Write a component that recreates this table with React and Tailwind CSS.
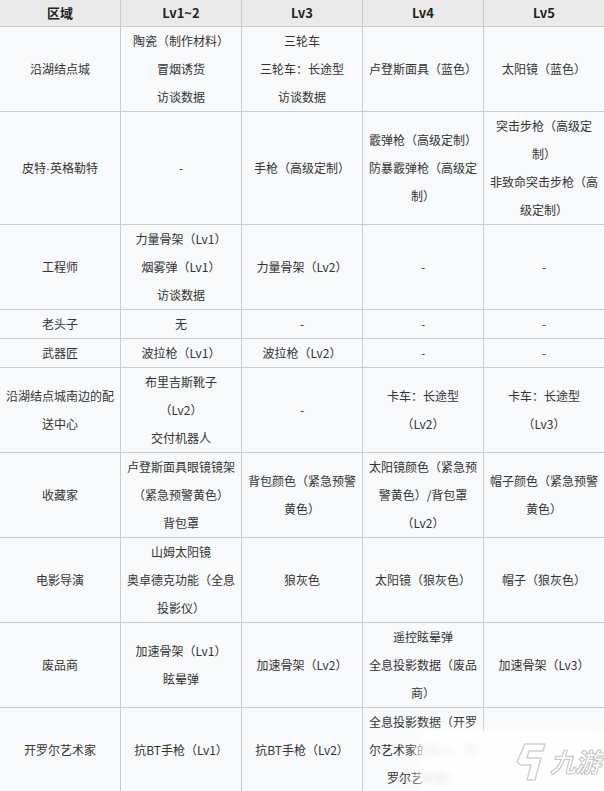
import React from "react";

const rows = [
  {
    area: "沿湖结点城",
    cells: [
      ["陶瓷（制作材料）", "冒烟诱货", "访谈数据"],
      ["三轮车", "三轮车：长途型", "访谈数据"],
      ["卢登斯面具（蓝色）"],
      ["太阳镜（蓝色）"],
    ],
  },
  {
    area: (
      <>
        皮特<span className="[font-family:'Liberation_Sans',sans-serif]">·</span>英格勒特
      </>
    ),
    cells: [
      ["-"],
      ["手枪（高级定制）"],
      ["霰弹枪（高级定制）", "防暴霰弹枪（高级定制）"],
      ["突击步枪（高级定制）", "非致命突击步枪（高级定制）"],
    ],
  },
  {
    area: "工程师",
    cells: [
      ["力量骨架（Lv1）", "烟雾弹（Lv1）", "访谈数据"],
      ["力量骨架（Lv2）"],
      ["-"],
      ["-"],
    ],
  },
  { area: "老头子", cells: [["无"], ["-"], ["-"], ["-"]] },
  { area: "武器匠", cells: [["波拉枪（Lv1）"], ["波拉枪（Lv2）"], ["-"], ["-"]] },
  {
    area: "沿湖结点城南边的配送中心",
    cells: [
      ["布里吉斯靴子", "（Lv2）", "交付机器人"],
      ["-"],
      ["卡车：长途型", "（Lv2）"],
      ["卡车：长途型", "（Lv3）"],
    ],
  },
  {
    area: "收藏家",
    cells: [
      ["卢登斯面具眼镜镜架（紧急预警黄色）", "背包罩"],
      ["背包颜色（紧急预警黄色）"],
      ["太阳镜颜色（紧急预警黄色）/背包罩（Lv2）"],
      ["帽子颜色（紧急预警黄色）"],
    ],
  },
  {
    area: "电影导演",
    cells: [
      ["山姆太阳镜", "奥卓德克功能（全息投影仪）"],
      ["狼灰色"],
      ["太阳镜（狼灰色）"],
      ["帽子（狼灰色）"],
    ],
  },
  {
    area: "废品商",
    cells: [
      ["加速骨架（Lv1）", "眩晕弹"],
      ["加速骨架（Lv2）"],
      ["遥控眩晕弹", "全息投影数据（废品商）"],
      ["加速骨架（Lv3）"],
    ],
  },
  {
    area: "开罗尔艺术家",
    cells: [
      ["抗BT手枪（Lv1）"],
      ["抗BT手枪（Lv2）"],
      ["全息投影数据（开罗尔艺术家的女儿，开罗尔艺术家）"],
      ["-"],
    ],
  },
];

const heads = ["区域", "Lv1~2", "Lv3", "Lv4", "Lv5"];

function Watermark() {
  return (
    <div className="absolute right-0 bottom-0 w-[181px] h-[60px] bg-white/85 backdrop-blur-[3px] shadow-[-6px_0_10px_rgba(255,255,255,0.8)] flex items-center justify-end pr-[4px] gap-[3px]">
      <svg width="34" height="42" viewBox="0 0 34 42">
        <path
          d="M12 4 L32 4 L30 11 L16 11 L14 18 L28 18 L22 40 L14 40 L18 25 L8 25 L4 22 Z"
          fill="#fff"
          stroke="#cfcfcf"
          strokeWidth="1.4"
          strokeLinejoin="round"
        />
      </svg>
      <span className="italic font-bold text-[26px] leading-none text-white [-webkit-text-stroke:1.2px_#cacaca] tracking-[-1px] [font-family:'Noto_Sans_CJK_SC',sans-serif]">
        九游
      </span>
    </div>
  );
}

export default function App() {
  return (
    <div className="relative w-[604px] h-[791px] overflow-hidden bg-white text-[#333] [font-family:'Noto_Sans_CJK_SC','Noto_Sans',sans-serif]">
      <table className="table-fixed border-collapse w-[605px] -ml-px bg-[#f8f9fa]">
        <colgroup>
          <col className="w-[121px]" />
          <col className="w-[121px]" />
          <col className="w-[121px]" />
          <col className="w-[121px]" />
          <col className="w-[121px]" />
        </colgroup>
        <thead>
          <tr className="bg-[#eaeaea]">
            {heads.map((h) => (
              <th
                key={h}
                className="border border-[#c8ccd1] border-t-0 px-[5px] py-0 text-[13px] leading-[26px] font-bold text-[#222] text-center"
              >
                {h}
              </th>
            ))}
          </tr>
        </thead>
        <tbody>
          {rows.map((r, k) => (
            <tr key={k}>
              <td className="border border-[#c8ccd1] px-[4px] py-0 text-[12px] leading-[28px] text-center align-middle">
                {r.area}
              </td>
              {r.cells.map((lines, i) => (
                <td
                  key={i}
                  className="border border-[#c8ccd1] px-[5px] py-0 text-[12px] leading-[28px] text-center align-middle"
                >
                  {lines.map((l, j) => (
                    <div key={j}>{l}</div>
                  ))}
                </td>
              ))}
            </tr>
          ))}
        </tbody>
      </table>
      <Watermark />
    </div>
  );
}
